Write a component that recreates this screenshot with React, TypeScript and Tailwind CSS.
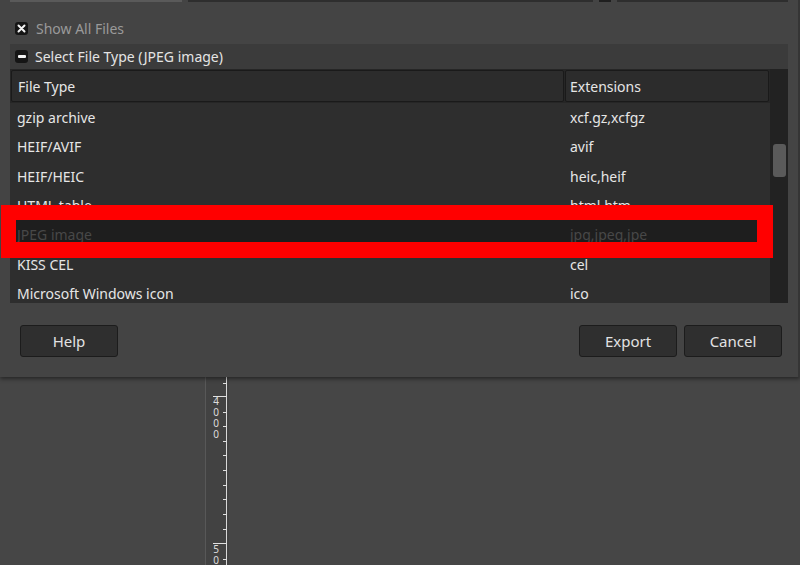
const rows: [string, string][] = [
  ['gzip archive', 'xcf.gz,xcfgz'],
  ['HEIF/AVIF', 'avif'],
  ['HEIF/HEIC', 'heic,heif'],
  ['HTML table', 'html,htm'],
  ['JPEG image', 'jpg,jpeg,jpe'],
  ['KISS CEL', 'cel'],
  ['Microsoft Windows icon', 'ico'],
];

const ticks = [383, 412, 426, 441, 455, 470, 485, 499, 514, 529, 559];

function Button({ label }: { label: string }) {
  return (
    <button className="w-[98px] h-[32px] rounded-[3px] bg-[#2f2f2f] border border-[#1c1c1c] text-[15px] text-[#e2e2e2]">
      {label}
    </button>
  );
}

export default function App() {
  return (
    <div
      className="relative w-[800px] h-[565px] overflow-hidden bg-[#464646] text-[14px]"
      style={{ fontFamily: '"Noto Sans", "Open Sans", sans-serif' }}
    >
      {/* Export dialog */}
      <div className="relative z-10 h-[377px] bg-[#444444] border-r-2 border-[#353535] shadow-[0_2px_4px_rgba(0,0,0,0.45)]">
        {/* edges of fields above */}
        <div className="flex h-[2px] gap-[6px] px-[10px]">
          <div className="w-[172px] bg-[#5a5a5a]" />
          <div className="w-[405px] bg-[#2e2e2e]" />
          <div className="w-[12px] bg-[#1f1f1f]" />
          <div className="flex-1 bg-[#2e2e2e]" />
        </div>

        {/* Show All Files */}
        <div className="flex items-center gap-[8px] pl-[15px] pt-[12px] pb-[2px] h-[42px]">
          <span className="flex items-center justify-center w-[13px] h-[13px] rounded-[3px] bg-[#151515]">
            <svg width="9" height="9" viewBox="0 0 9 9">
              <path d="M1.5 1.5 L7.5 7.5 M7.5 1.5 L1.5 7.5" stroke="#f2f2f2" strokeWidth="2" strokeLinecap="round" />
            </svg>
          </span>
          <span className="text-[#9a9a9a]">Show All Files</span>
        </div>

        {/* Expander */}
        <div className="mx-[10px] h-[25px] bg-[#3b3b3b] flex items-center gap-[7px] pl-[5px]">
          <span className="flex items-center justify-center w-[13px] h-[13px] rounded-[3px] bg-[#151515]">
            <span className="w-[8px] h-[3px] bg-[#f2f2f2] rounded-[1px]" />
          </span>
          <span className="text-[#e4e4e4]">Select File Type (JPEG image)</span>
        </div>

        {/* File type list */}
        <div className="mx-[10px] h-[234px] flex bg-[#2e2e2e] overflow-hidden">
          <div className="flex-1 flex flex-col">
            <div className="flex shrink-0 h-[34px] bg-[#262626] p-[1px] gap-[1px]">
              <div className="w-[553px] bg-[#2c2c2c] border border-[#1a1a1a] rounded-[2px] flex items-center pl-[6px] text-[#e6e6e6]">
                File Type
              </div>
              <div className="flex-1 bg-[#2c2c2c] border border-[#1a1a1a] rounded-[2px] flex items-center pl-[4px] text-[#e6e6e6]">
                Extensions
              </div>
            </div>
            {rows.map(([name, ext]) => {
              const sel = name === 'JPEG image';
              return (
                <div
                  key={name}
                  className={
                    sel
                      ? 'flex shrink-0 h-[29.3px] items-center bg-[#1e1e1e] text-[#484848]'
                      : 'flex shrink-0 h-[29.3px] items-center text-[#e6e6e6]'
                  }
                >
                  <div className="w-[555px] pl-[7px]">{name}</div>
                  <div className="flex-1 pl-[5px]">{ext}</div>
                </div>
              );
            })}
          </div>
          {/* scrollbar */}
          <div className="w-[18px] bg-[#222222] pt-[75px] flex justify-center">
            <div className="w-[13px] h-[33px] rounded-[3px] bg-[#5a5a5a]" />
          </div>
        </div>

        {/* Buttons */}
        <div className="flex items-center pl-[20px] pr-[16px] pt-[22px]">
          <Button label="Help" />
          <div className="flex-1" />
          <div className="flex gap-[7px]">
            <Button label="Export" />
            <Button label="Cancel" />
          </div>
        </div>
      </div>

      {/* Ruler below the dialog */}
      <div className="absolute left-[205px] top-[377px] w-[24px] h-[188px] bg-[#424242] border-l border-[#585858]">
        <div className="relative w-full h-full">
          <div className="absolute right-[2px] top-0 w-px h-full bg-[#d8d8d8]" />
          {ticks.map((t) => (
            <div key={t} className="absolute right-[2px] w-[4px] h-px bg-[#e0e0e0]" style={{ top: t - 377 }} />
          ))}
          <div className="absolute right-[2px] w-[14px] h-px bg-[#e0e0e0]" style={{ top: 396 - 377 }} />
          <div className="absolute right-[2px] w-[14px] h-px bg-[#e0e0e0]" style={{ top: 543 - 377 }} />
          <div className="absolute left-[5px] top-[17px] [writing-mode:vertical-lr] [text-orientation:upright] text-[10px] leading-[10px] tracking-[-3px] text-[#dcdcdc]">
            4000
          </div>
          <div className="absolute left-[5px] top-[165px] [writing-mode:vertical-lr] [text-orientation:upright] text-[10px] leading-[10px] tracking-[-3px] text-[#dcdcdc]">
            50
          </div>
        </div>
      </div>

      {/* Red highlight annotation */}
      <div className="absolute z-20 left-[1px] top-[205px] w-[772px] h-[53px] border-[15px] border-b-[16px] border-r-[16px] border-[#ff0000]" />
    </div>
  );
}
